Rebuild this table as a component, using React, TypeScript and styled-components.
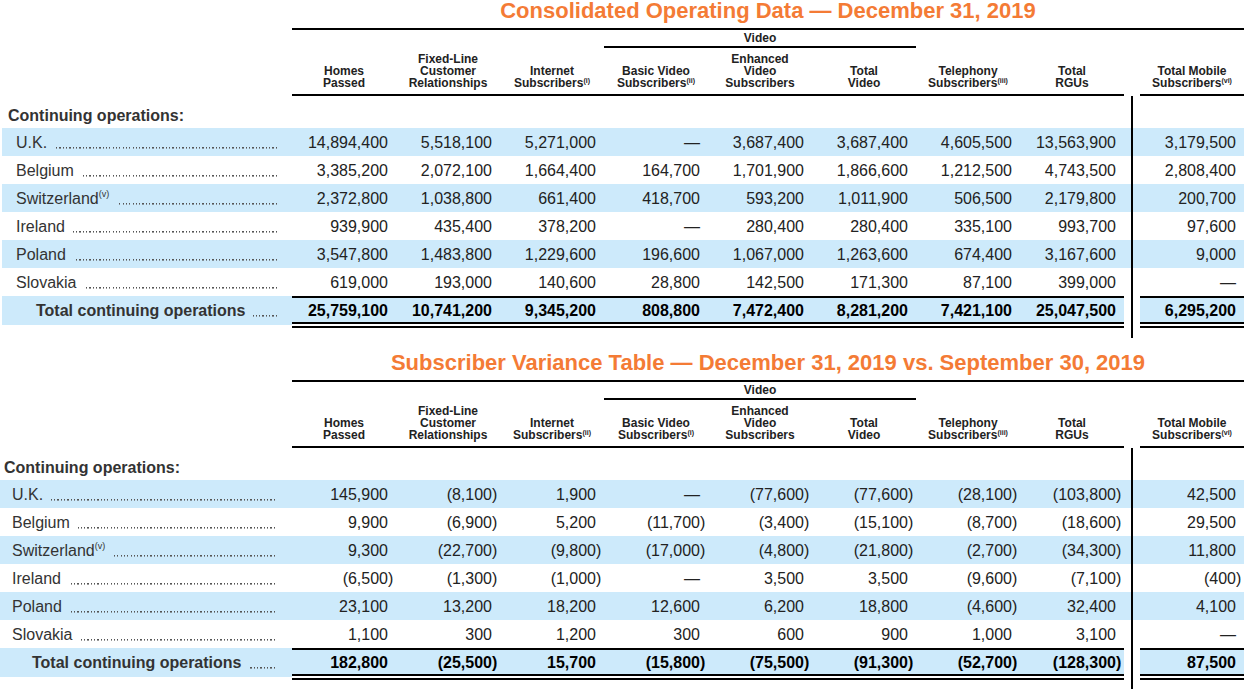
import React from 'react';
import styled, { createGlobalStyle } from 'styled-components';

const BLUE = '#cdeafb';
const ORANGE = '#f47b35';
const COLS = 'repeat(8, 104px) 16px 104px';

const GlobalStyle = createGlobalStyle`
  html, body { margin: 0; padding: 0; background: #fff; overflow: hidden; }
  body { font-family: "Liberation Sans", Arial, Helvetica, sans-serif; }
`;

type Head = { lines: string[]; sup?: string };
type Row = { label: string; sup?: string; values: string[] };
type Layout = { shift: number; labelW: number; section: number; row: number; total: number; right: number };

const Page = styled.div`
  width: 1246px;
  font-family: "Liberation Sans", Arial, Helvetica, sans-serif;
  color: #222;
`;

const Block = styled.section<{ $shift: number }>`
  margin-left: ${p => p.$shift}px;
  & + & { margin-top: 14px; }
`;

const TitleRow = styled.div`
  display: flex;
  height: 28px;
`;

const Spacer = styled.div<{ $w: number }>`
  width: ${p => p.$w}px;
  flex: none;
`;

const Title = styled.h2`
  margin: 0;
  width: 952px;
  text-align: center;
  font-size: 22px;
  line-height: 22px;
  font-weight: 700;
  color: ${ORANGE};
  white-space: nowrap;
`;

const HeadRow = styled.div`
  display: flex;
`;

const HeadArea = styled.div`
  width: 952px;
  border-top: 2px solid #000;
  display: grid;
  grid-template-columns: ${COLS};
  grid-template-rows: 18px 48px;
  font-size: 12px;
  font-weight: 700;
  color: #222;
`;

const VideoHead = styled.div`
  grid-column: 4 / 7;
  grid-row: 1;
  box-sizing: border-box;
  height: 18px;
  line-height: 16px;
  text-align: center;
  border-bottom: 2px solid #000;
`;

const ColHead = styled.div<{ $col: number; $gap?: boolean }>`
  grid-column: ${p => p.$col};
  grid-row: 2;
  box-sizing: border-box;
  display: flex;
  flex-direction: column;
  justify-content: flex-end;
  align-items: center;
  text-align: center;
  padding-bottom: 5px;
  line-height: 12px;
  border-bottom: ${p => (p.$gap ? 'none' : '2px solid #000')};
`;

const HeadLine = styled.span`
  display: block;
  white-space: nowrap;
`;

const HeadSup = styled.sup`
  font-size: 7px;
  line-height: 0;
  vertical-align: 4px;
`;

const Body = styled.div<{ $labelW: number }>`
  display: grid;
  grid-template-columns: ${p => p.$labelW}px ${COLS};
  font-size: 16px;
`;

const Label = styled.div<{ $shade?: boolean; $indent: number; $right: number }>`
  box-sizing: border-box;
  display: flex;
  align-items: baseline;
  height: 28px;
  padding: 2px ${p => p.$right}px 0 ${p => p.$indent}px;
  line-height: 26px;
  color: #333;
  white-space: nowrap;
  background: ${p => (p.$shade ? BLUE : 'transparent')};
`;

const SectionLabel = styled.div<{ $indent: number }>`
  box-sizing: border-box;
  height: 32px;
  padding: 11px 0 0 ${p => p.$indent}px;
  line-height: 18px;
  font-weight: 700;
  color: #333;
  white-space: nowrap;
`;

const TotalLabel = styled(Label)`
  align-self: start;
  height: 29px;
  padding-top: 3px;
  padding-bottom: 3px;
  line-height: 23px;
  font-weight: 700;
`;

const LabelSup = styled.sup`
  font-size: 9px;
  line-height: 0;
  vertical-align: 7px;
`;

const Leader = styled.span<{ $dotY: number }>`
  flex: 1;
  align-self: stretch;
  min-width: 0;
  margin-left: 8px;
  background-image: repeating-linear-gradient(
    to left,
    #555 0,
    #555 1.3px,
    transparent 1.3px,
    transparent 3.33px
  );
  background-size: 100% 1.6px;
  background-position: 0 ${p => p.$dotY}px;
  background-repeat: no-repeat;
`;

const Num = styled.div<{ $shade?: boolean; $total?: boolean }>`
  box-sizing: border-box;
  height: ${p => (p.$total ? '32px' : '28px')};
  padding: ${p => (p.$total ? '1px' : '2px')} 8px 0 0;
  line-height: ${p => (p.$total ? '23px' : '26px')};
  text-align: right;
  white-space: nowrap;
  color: ${p => (p.$total ? '#000' : '#222')};
  font-weight: ${p => (p.$total ? 700 : 400)};
  background: ${p => (p.$shade ? BLUE : 'transparent')};
  background-clip: padding-box;
  border-top: ${p => (p.$total ? '2px solid #000' : 'none')};
  border-bottom: ${p => (p.$total ? '6px double #000' : 'none')};
`;

const Empty = styled.div``;

const Gap = styled.div<{ $shade?: boolean; $h: number }>`
  height: ${p => p.$h}px;
  background-color: ${p => (p.$shade ? BLUE : 'transparent')};
  background-image: linear-gradient(to right, transparent 7px, #000 7px, #000 9px, transparent 9px);
`;

const Paren = styled.span`
  display: inline-block;
  width: 0;
`;

function Value({ v }: { v: string }) {
  if (v.startsWith('(') && v.endsWith(')')) {
    return (
      <>
        {v.slice(0, -1)}
        <Paren>)</Paren>
      </>
    );
  }
  return <>{v}</>;
}

function NumCells({ values, shade, total }: { values: string[]; shade?: boolean; total?: boolean }) {
  return (
    <>
      {values.slice(0, 8).map((v, i) => (
        <Num key={i} $shade={shade} $total={total}>
          <Value v={v} />
        </Num>
      ))}
      <Gap $shade={total ? false : shade} $h={total ? 32 : 28} />
      <Num $shade={shade} $total={total}>
        <Value v={values[8]} />
      </Num>
    </>
  );
}

function DataTable({ title, heads, rows, total, layout }: {
  title: string;
  heads: Head[];
  rows: Row[];
  total: string[];
  layout: Layout;
}) {
  const headCols = [1, 2, 3, 4, 5, 6, 7, 8, 10];
  return (
    <Block $shift={layout.shift}>
      <TitleRow>
        <Spacer $w={layout.labelW} />
        <Title>{title}</Title>
      </TitleRow>
      <HeadRow>
        <Spacer $w={layout.labelW} />
        <HeadArea>
          <VideoHead>Video</VideoHead>
          {heads.map((h, i) => (
            <ColHead key={i} $col={headCols[i]}>
              {h.lines.map((l, j) => (
                <HeadLine key={j}>
                  {l}
                  {j === h.lines.length - 1 && h.sup ? <HeadSup>{h.sup}</HeadSup> : null}
                </HeadLine>
              ))}
            </ColHead>
          ))}
          <ColHead $col={9} $gap />
        </HeadArea>
      </HeadRow>
      <Body $labelW={layout.labelW}>
        <SectionLabel $indent={layout.section}>Continuing operations:</SectionLabel>
        {Array.from({ length: 8 }).map((_, i) => (
          <Empty key={i} />
        ))}
        <Gap $h={32} />
        <Empty />
        {rows.map((r, i) => (
          <React.Fragment key={r.label}>
            <Label $shade={i % 2 === 0} $indent={layout.row} $right={layout.right}>
              <span>
                {r.label}
                {r.sup ? <LabelSup>{r.sup}</LabelSup> : null}
              </span>
              <Leader $dotY={17} />
            </Label>
            <NumCells values={r.values} shade={i % 2 === 0} />
          </React.Fragment>
        ))}
        <TotalLabel $shade $indent={layout.total} $right={layout.right}>
          <span>Total continuing operations</span>
          <Leader $dotY={15.5} />
        </TotalLabel>
        <NumCells values={total} shade total />
        {Array.from({ length: 9 }).map((_, i) => (
          <Empty key={'t' + i} />
        ))}
        <Gap $h={10} />
        <Empty />
      </Body>
    </Block>
  );
}

const heads1: Head[] = [
  { lines: ['Homes', 'Passed'] },
  { lines: ['Fixed-Line', 'Customer', 'Relationships'] },
  { lines: ['Internet', 'Subscribers'], sup: '(i)' },
  { lines: ['Basic Video', 'Subscribers'], sup: '(ii)' },
  { lines: ['Enhanced', 'Video', 'Subscribers'] },
  { lines: ['Total', 'Video'] },
  { lines: ['Telephony', 'Subscribers'], sup: '(iii)' },
  { lines: ['Total', 'RGUs'] },
  { lines: ['Total Mobile', 'Subscribers'], sup: '(vi)' },
];

const heads2: Head[] = [
  { lines: ['Homes', 'Passed'] },
  { lines: ['Fixed-Line', 'Customer', 'Relationships'] },
  { lines: ['Internet', 'Subscribers'], sup: '(ii)' },
  { lines: ['Basic Video', 'Subscribers'], sup: '(i)' },
  { lines: ['Enhanced', 'Video', 'Subscribers'] },
  { lines: ['Total', 'Video'] },
  { lines: ['Telephony', 'Subscribers'], sup: '(iii)' },
  { lines: ['Total', 'RGUs'] },
  { lines: ['Total Mobile', 'Subscribers'], sup: '(vi)' },
];

const rows1: Row[] = [
  { label: 'U.K.', values: ['14,894,400', '5,518,100', '5,271,000', '—', '3,687,400', '3,687,400', '4,605,500', '13,563,900', '3,179,500'] },
  { label: 'Belgium', values: ['3,385,200', '2,072,100', '1,664,400', '164,700', '1,701,900', '1,866,600', '1,212,500', '4,743,500', '2,808,400'] },
  { label: 'Switzerland', sup: '(v)', values: ['2,372,800', '1,038,800', '661,400', '418,700', '593,200', '1,011,900', '506,500', '2,179,800', '200,700'] },
  { label: 'Ireland', values: ['939,900', '435,400', '378,200', '—', '280,400', '280,400', '335,100', '993,700', '97,600'] },
  { label: 'Poland', values: ['3,547,800', '1,483,800', '1,229,600', '196,600', '1,067,000', '1,263,600', '674,400', '3,167,600', '9,000'] },
  { label: 'Slovakia', values: ['619,000', '193,000', '140,600', '28,800', '142,500', '171,300', '87,100', '399,000', '—'] },
];
const total1 = ['25,759,100', '10,741,200', '9,345,200', '808,800', '7,472,400', '8,281,200', '7,421,100', '25,047,500', '6,295,200'];

const rows2: Row[] = [
  { label: 'U.K.', values: ['145,900', '(8,100)', '1,900', '—', '(77,600)', '(77,600)', '(28,100)', '(103,800)', '42,500'] },
  { label: 'Belgium', values: ['9,900', '(6,900)', '5,200', '(11,700)', '(3,400)', '(15,100)', '(8,700)', '(18,600)', '29,500'] },
  { label: 'Switzerland', sup: '(v)', values: ['9,300', '(22,700)', '(9,800)', '(17,000)', '(4,800)', '(21,800)', '(2,700)', '(34,300)', '11,800'] },
  { label: 'Ireland', values: ['(6,500)', '(1,300)', '(1,000)', '—', '3,500', '3,500', '(9,600)', '(7,100)', '(400)'] },
  { label: 'Poland', values: ['23,100', '13,200', '18,200', '12,600', '6,200', '18,800', '(4,600)', '32,400', '4,100'] },
  { label: 'Slovakia', values: ['1,100', '300', '1,200', '300', '600', '900', '1,000', '3,100', '—'] },
];
const total2 = ['182,800', '(25,500)', '15,700', '(15,800)', '(75,500)', '(91,300)', '(52,700)', '(128,300)', '87,500'];

const layout1: Layout = { shift: 2, labelW: 290, section: 6, row: 14, total: 34, right: 15 };
const layout2: Layout = { shift: 0, labelW: 292, section: 4, row: 12, total: 32, right: 17 };

export default function App() {
  return (
    <Page>
      <GlobalStyle />
      <DataTable
        title="Consolidated Operating Data — December 31, 2019"
        heads={heads1}
        rows={rows1}
        total={total1}
        layout={layout1}
      />
      <DataTable
        title="Subscriber Variance Table — December 31, 2019 vs. September 30, 2019"
        heads={heads2}
        rows={rows2}
        total={total2}
        layout={layout2}
      />
    </Page>
  );
}
